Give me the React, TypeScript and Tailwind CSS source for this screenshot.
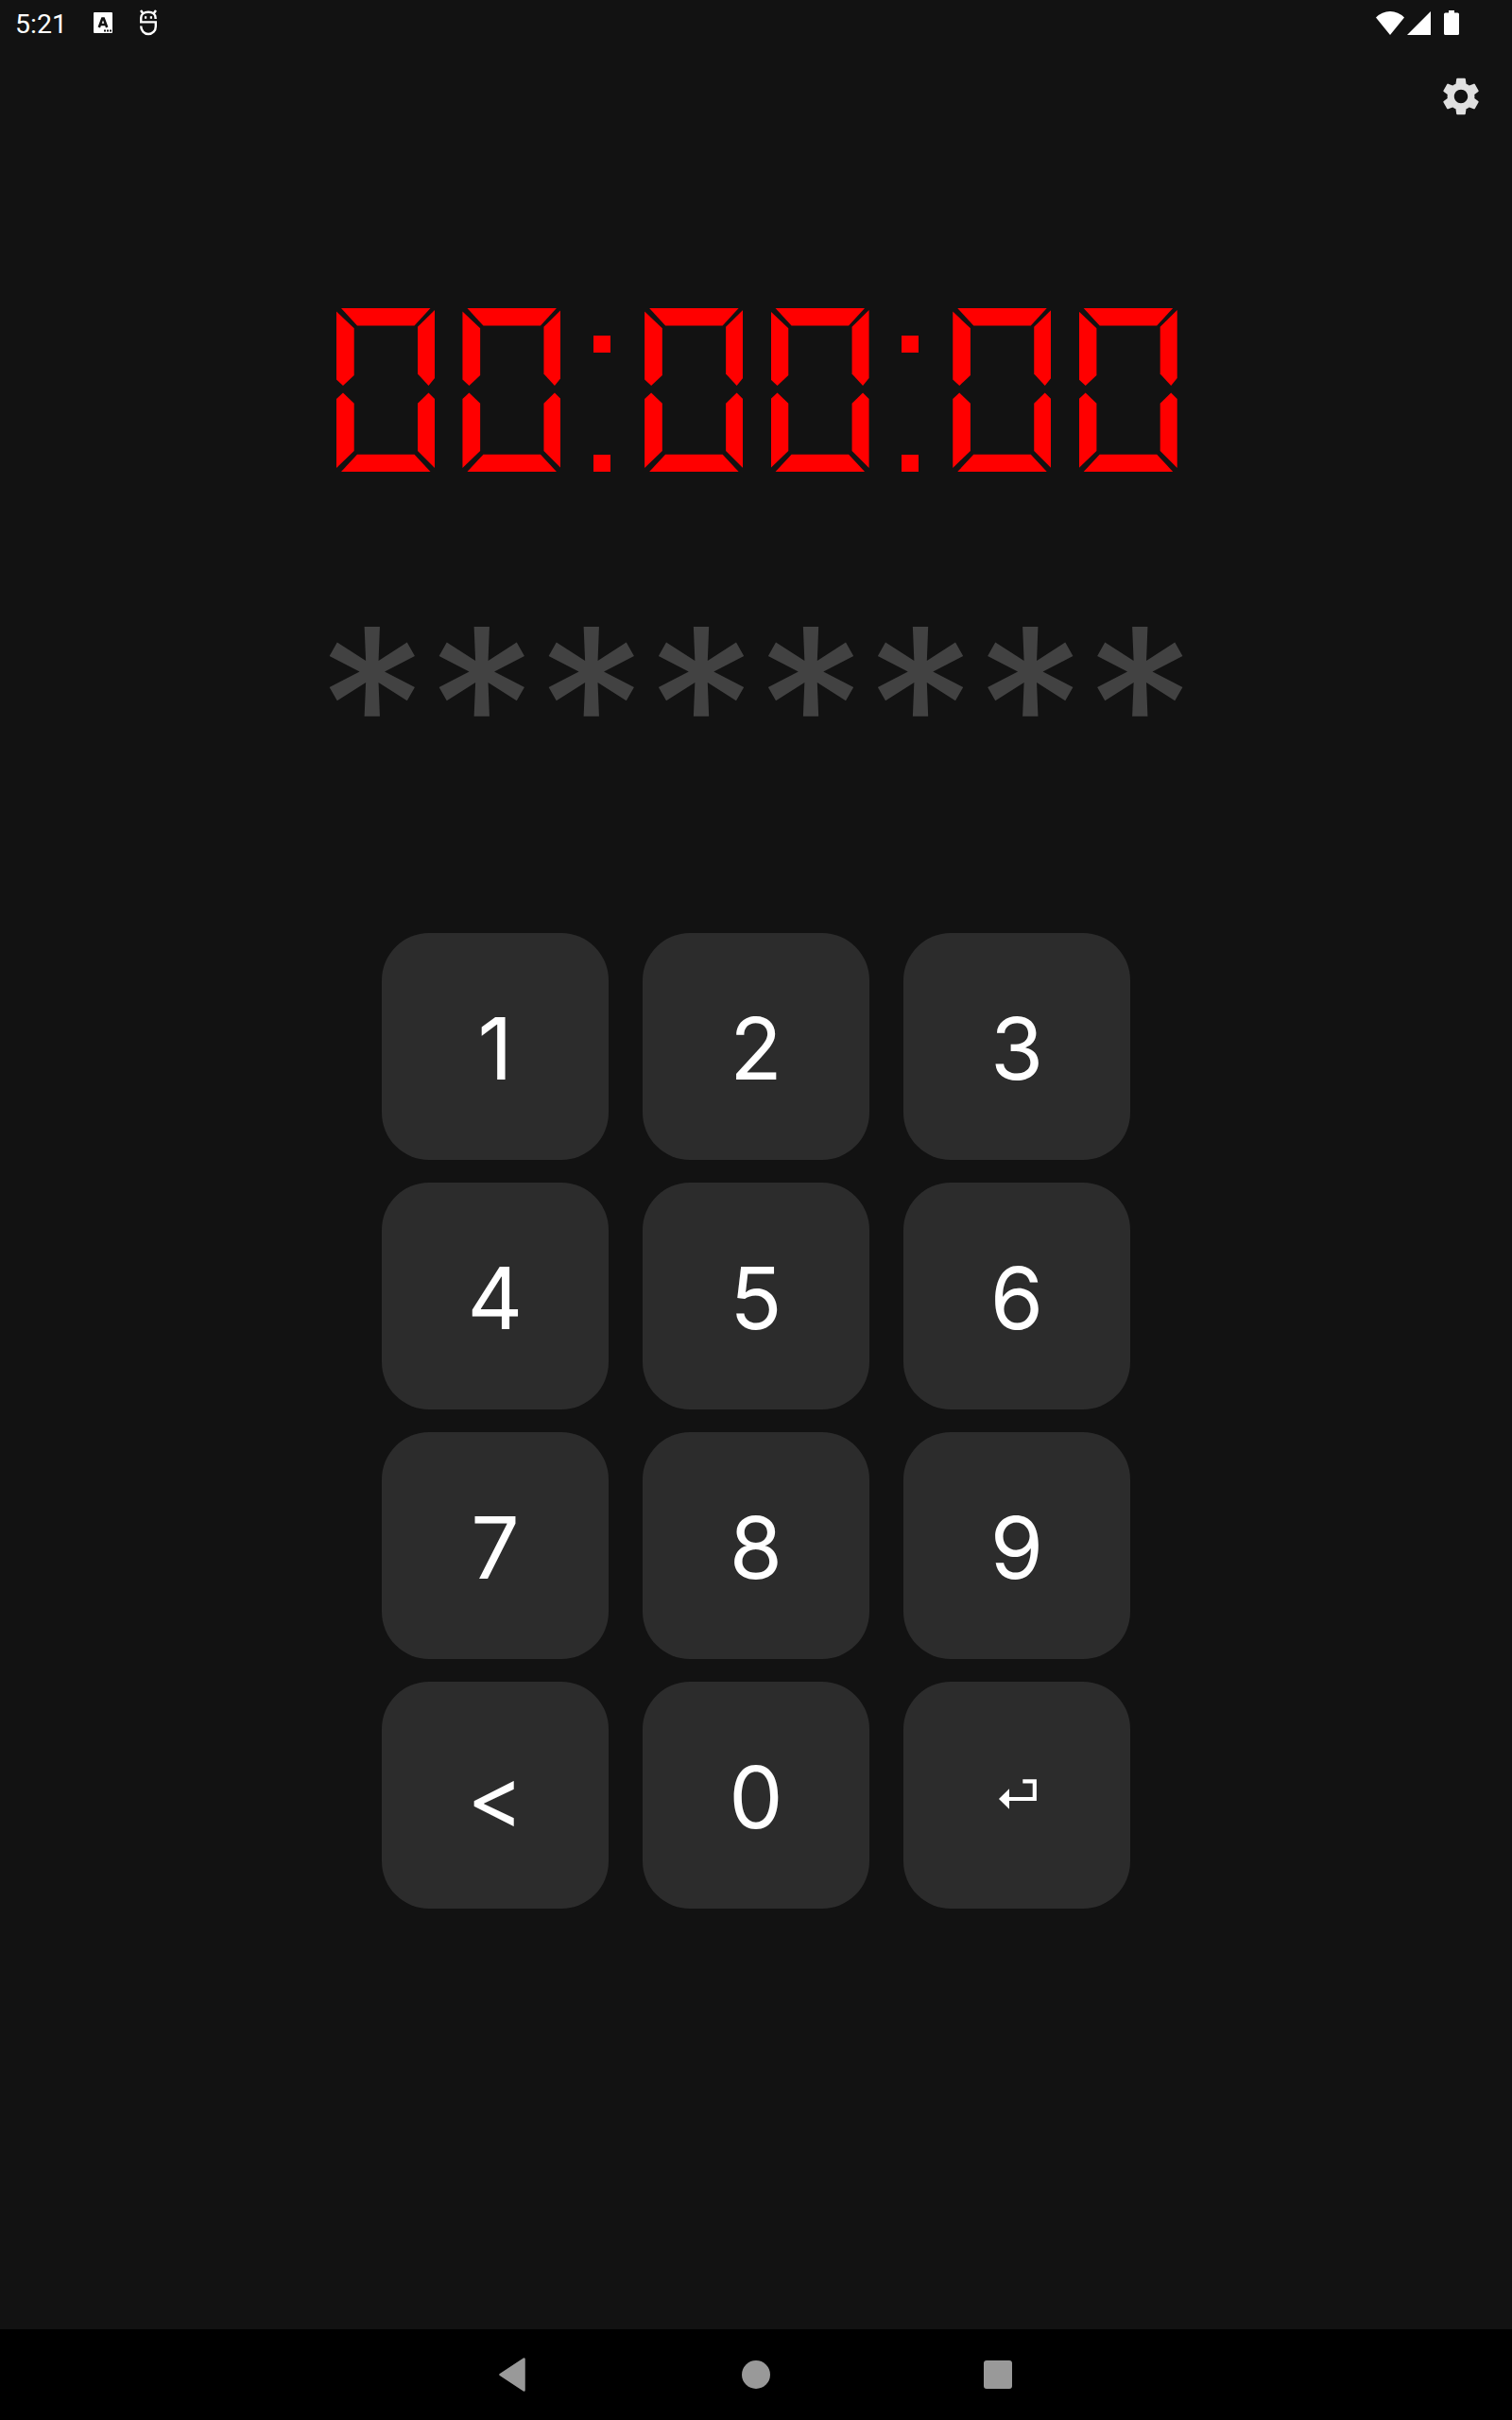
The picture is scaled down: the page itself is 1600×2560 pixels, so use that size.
import { MdSettings } from "react-icons/md";

// Outline of each segment inside a 104x173 cell
const segments = [
  { id: "top", shape: "[clip-path:polygon(5px_0,99.5px_0,82.5px_18.5px,22px_18.5px)]" },
  { id: "topLeft", shape: "[clip-path:polygon(0_3.5px,18.7px_21.3px,18.7px_71px,7px_82px,0_75.5px)]" },
  { id: "topRight", shape: "[clip-path:polygon(104px_2px,104px_74px,97.5px_82px,86px_69.5px,86px_19.7px)]" },
  { id: "middle", shape: "[clip-path:polygon(9px_86px,20px_77px,84px_77px,95px_86px,84px_95px,20px_95px)]" },
  { id: "bottomLeft", shape: "[clip-path:polygon(7px_89.5px,18.7px_100.7px,18.7px_151px,0_169px,0_96px)]" },
  { id: "bottomRight", shape: "[clip-path:polygon(97.5px_89.5px,104px_96px,104px_169px,86px_151px,86px_100.7px)]" },
  { id: "bottom", shape: "[clip-path:polygon(22px_154.7px,82.5px_154.7px,99.5px_173px,5px_173px)]" },
];

const lit: Record<string, string[]> = {
  "0": ["top", "topLeft", "topRight", "bottomLeft", "bottomRight", "bottom"],
  "8": ["top", "topLeft", "topRight", "middle", "bottomLeft", "bottomRight", "bottom"],
};

const keys = ["1", "2", "3", "4", "5", "6", "7", "8", "9", "<", "0", "enter"];

function Digit({ value }: { value: string }) {
  return (
    <div className="grid w-[104px] h-[173px]">
      {segments
        .filter((segment) => lit[value].includes(segment.id))
        .map((segment) => (
          <div key={segment.id} className={`col-start-1 row-start-1 bg-[#ff0000] ${segment.shape}`} />
        ))}
    </div>
  );
}

function Colon() {
  return (
    <div className="flex flex-col justify-between w-[18px] h-[173px] pt-[28.5px] ml-[34.6px] mr-[36.1px]">
      <div className="size-[18px] bg-[#ff0000]" />
      <div className="size-[18px] bg-[#ff0000]" />
    </div>
  );
}

function Timer({ time }: { time: string }) {
  const groups = time.split(":");

  return (
    <div role="timer" aria-label={time} className="flex pl-[356px] mt-[186px]">
      {groups.map((group, index) => (
        <div key={index} className="flex">
          {index > 0 && <Colon />}
          <div className="flex gap-[29.45px]">
            {group.split("").map((value, idx) => (
              <Digit key={idx} value={value} />
            ))}
          </div>
        </div>
      ))}
    </div>
  );
}

function EnterIcon() {
  return (
    <svg width="40" height="32" viewBox="0 0 40 32" className="mb-[7px] ml-px">
      <path d="M25.3 2.3H37.8V21H10" fill="none" stroke="#fff" strokeWidth="4.2" />
      <path d="M0 21L11 10.3V31.7Z" fill="#fff" />
    </svg>
  );
}

function StatusBar() {
  return (
    <div className="flex items-center h-[50px] pl-4 text-white">
      <span className="font-['Roboto',sans-serif] text-[28.5px] leading-[50px] w-[83px] pt-0.5">5:21</span>
      <svg width="20" height="22" viewBox="0 0 20 22" className="mt-[-2px]">
        <rect width="20" height="22" rx="1" fill="#fff" />
        <path d="M5.8 16L9.3 6.5H10.7L14.2 16M7.3 13H12.7" fill="none" stroke="#121212" strokeWidth="2.6" />
        <path d="M11 19.5h2M14 19.5h2M17 19.5h2" stroke="#121212" strokeWidth="2" />
      </svg>
      <svg width="20" height="28" viewBox="0 0 20 28" className="ml-7 mt-[-2px]" fill="none" stroke="#fff" strokeWidth="2.4">
        <path d="M17.600 10V9C17.600 5 14.500 2.800 10 2.800S2.200 5 2.200 9V13.400H17.800V18C17.800 22.500 14.500 26 10 26S2.200 22.500 2.200 17.500" />
        <path d="M2 1L4.500 4.500M18 1L15.500 4.500" />
        <path d="M6 8.500H8.200M11.800 8.500H14" />
      </svg>
      <svg width="30" height="25" viewBox="0 0 30 25" className="ml-auto mt-[-2px]">
        <path d="M0 6.500Q6.500 0 15 0T30 6.500L15 25Z" fill="#fff" />
      </svg>
      <svg width="25" height="25" viewBox="0 0 25 25" className="ml-[3px] mt-[-1px]">
        <path d="M25 0V25H0Z" fill="#fff" />
      </svg>
      <svg width="16" height="26" viewBox="0 0 16 26" className="ml-[14px] mr-[56px] mt-[-2px]">
        <path d="M5 0H11V2.500H14.500Q16 2.500 16 4V24.500Q16 26 14.500 26H1.500Q0 26 0 24.500V4Q0 2.500 1.500 2.500H5Z" fill="#fff" />
      </svg>
    </div>
  );
}

function NavBar() {
  return (
    <div className="flex items-center h-24 bg-black pl-[527px]">
      <svg width="29" height="36" viewBox="0 0 29 36">
        <path d="M27.500 1.500V34.500L2.500 18Z" fill="#999" stroke="#999" strokeWidth="2.500" strokeLinejoin="round" />
      </svg>
      <div className="size-[30px] rounded-full bg-[#999] ml-[229px]" />
      <div className="size-[30px] rounded-[3px] bg-[#999] ml-[226px]" />
    </div>
  );
}

export default function App() {
  return (
    <div className="flex flex-col w-[1600px] h-[2560px] bg-[#121212] overflow-hidden">
      <StatusBar />

      <div className="flex justify-end h-[90px] pt-7 pr-[30px]">
        <MdSettings className="size-12 text-[#e0e0e0]" />
      </div>

      <Timer time="00:00:00" />

      <div className="mt-[109px] h-[280px] text-center font-['Inter',sans-serif] text-[231.7px] leading-[280px] text-[#424242]">
        ********
      </div>

      <div className="grid grid-cols-[240px_240px_240px] justify-center gap-x-9 gap-y-6 mt-[99px]">
        {keys.map((key) => (
          <button
            key={key}
            className="flex items-center justify-center size-60 rounded-[50px] bg-[#2c2c2c] pt-1 font-['Inter',sans-serif] text-[91px] leading-none text-white"
          >
            {key === "enter" ? <EnterIcon /> : key}
          </button>
        ))}
      </div>

      <div className="mt-auto">
        <NavBar />
      </div>
    </div>
  );
}
